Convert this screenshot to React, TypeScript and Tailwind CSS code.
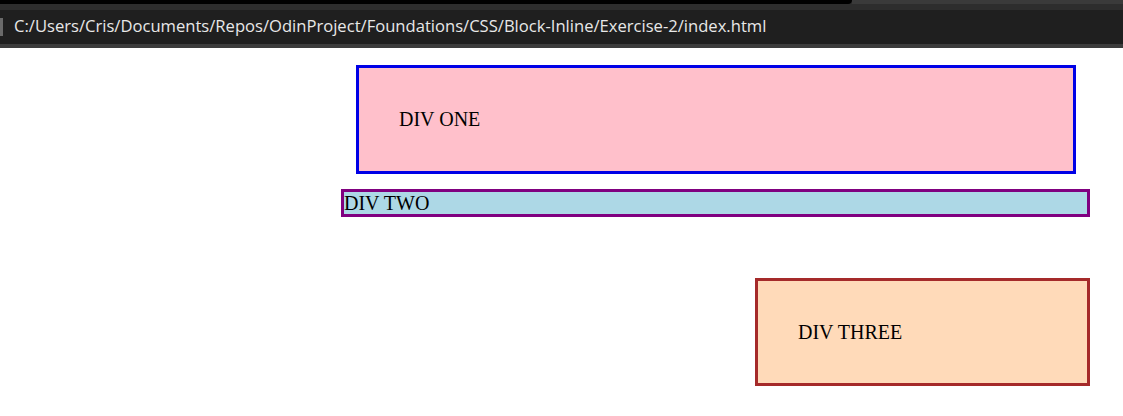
export default function App() {
  return (
    <div className="min-h-[416px] bg-white">
      {/* address bar */}
      <div className="relative h-[48px] bg-[#2d2d2d]">
        <div className="flex h-[4px]">
          <div className="w-[852px] rounded-br-[6px] bg-black" />
          <div className="flex-1 bg-[#3a3a3a]" />
        </div>
        <div className="mt-[6px] flex h-[34px] items-center bg-[#1f1f1f]">
          <div className="h-[18px] w-[3px] bg-[#6a6a6a]" />
          <span className="ml-[11px] -mt-[2px] font-['Open_Sans',sans-serif] text-[16.6px] text-[#e8e8e8]">
            C:/Users/Cris/Documents/Repos/OdinProject/Foundations/CSS/Block-Inline/Exercise-2/index.html
          </span>
        </div>
        <div className="h-[4px] bg-[#3c3c3c]" />
      </div>

      <div className="font-['Liberation_Serif',serif] text-[20px] leading-[23px] text-black">
        <div className="ml-[356px] mt-[17px] w-[720px] border-[3px] border-[#0000e6] bg-[#ffc0cb] p-[40px]">
          DIV ONE
        </div>
        <div className="ml-[341px] mt-[15px] w-[749px] border-[3px] border-[#800080] bg-[#add8e6] leading-[22px]">
          DIV TWO
        </div>
        <div className="ml-[755px] mt-[61px] w-[335px] border-[3px] border-[#a52a2a] bg-[#ffdab9] px-[40px] pt-[40px] pb-[39px]">
          DIV THREE
        </div>
      </div>
    </div>
  );
}
